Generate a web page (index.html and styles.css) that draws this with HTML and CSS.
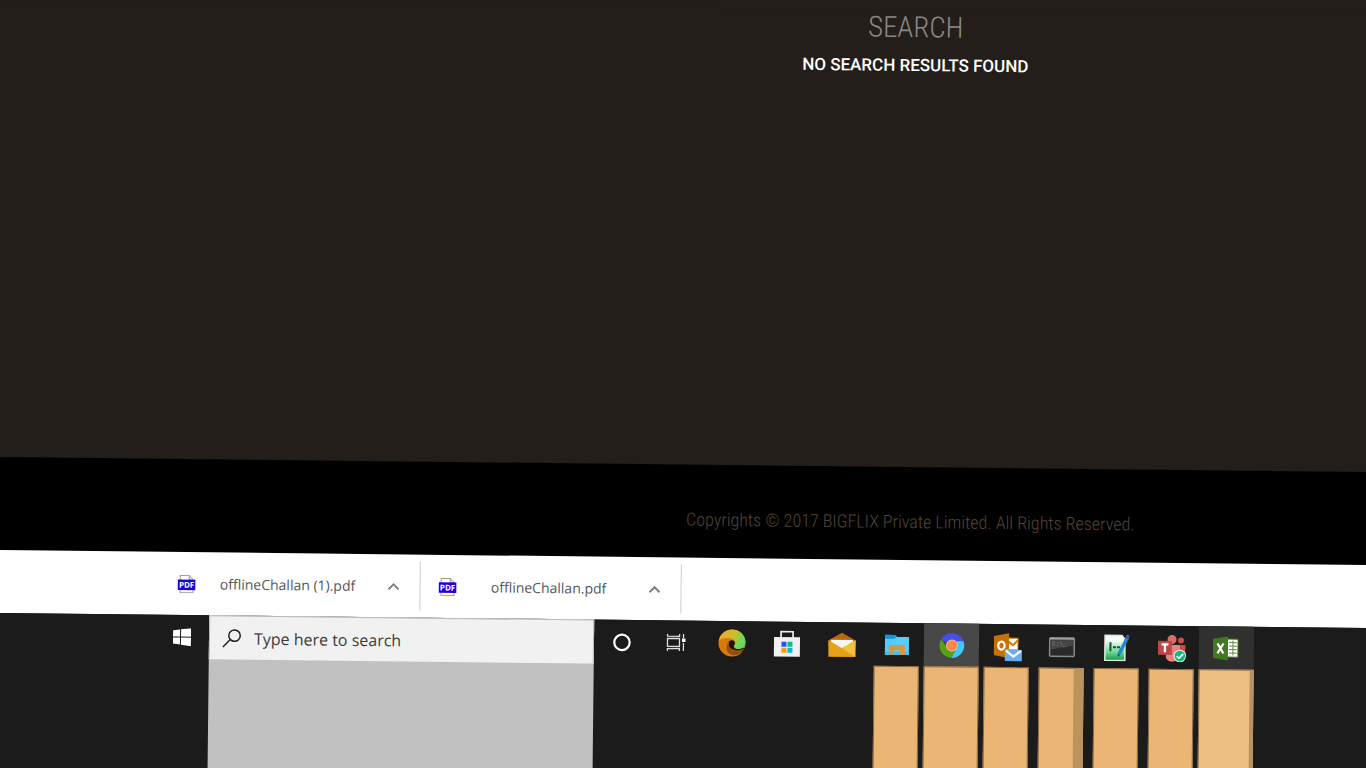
FILE: index.html
```html
<!DOCTYPE html>
<html lang="en">
<head>
<meta charset="utf-8">
<title>Search</title>
<link rel="stylesheet" href="styles.css">
</head>
<body>
<div class="scene">
  <main class="results">
    <h1 class="results-title">SEARCH</h1>
    <p class="results-message">NO SEARCH RESULTS FOUND</p>
  </main>
  <footer class="copyright">Copyrights © 2017 BIGFLIX Private Limited. All Rights Reserved.</footer>

  <section class="downloads" aria-label="Downloads">
    <div class="download">
      <svg class="pdf" viewBox="0 0 18 18" aria-hidden="true"><path d="M2.500 .5h9l4 4v13h-13z" fill="#fff" stroke="#999"/><path d="M11.500 .5v4h4" fill="#ddd" stroke="#999"/><rect y="4.500" width="18" height="10.500" fill="#1d00dc"/><text class="pdf-text" x="9" y="12.700">PDF</text></svg>
      <span class="download-name">offlineChallan (1).pdf</span>
      <button class="chevron" aria-label="Options for offlineChallan (1).pdf"><svg viewBox="0 0 12 8"><path d="M1 7l5-5 5 5" fill="none" stroke="#808080" stroke-width="2"/></svg></button>
    </div>
    <div class="download">
      <svg class="pdf" viewBox="0 0 18 18" aria-hidden="true"><path d="M2.500 .5h9l4 4v13h-13z" fill="#fff" stroke="#999"/><path d="M11.500 .5v4h4" fill="#ddd" stroke="#999"/><rect y="4.500" width="18" height="10.500" fill="#1d00dc"/><text class="pdf-text" x="9" y="12.700">PDF</text></svg>
      <span class="download-name">offlineChallan.pdf</span>
      <button class="chevron" aria-label="Options for offlineChallan.pdf"><svg viewBox="0 0 12 8"><path d="M1 7l5-5 5 5" fill="none" stroke="#808080" stroke-width="2"/></svg></button>
    </div>
  </section>

  <nav class="taskbar" aria-label="Taskbar">
    <div class="start">
      <button class="task" aria-label="Start"><svg class="start-icon" viewBox="0 0 18 18" fill="#fff"><path d="M0 2.400L7 1.400V8.500H0zM8 1.200L18 0V8.500H8zM0 9.500H7V16.500L0 15.500zM8 9.500H18V18L8 16.700z"/></svg></button>
    </div>
    <div class="search">
      <label class="search-box">
        <svg class="search-icon" viewBox="0 0 20 20" fill="none" stroke="#222" stroke-width="1.500"><circle cx="12.500" cy="7" r="5.700"/><path d="M8.300 11L1 18.500"/></svg>
        <input class="search-input" type="text" placeholder="Type here to search" aria-label="Type here to search">
      </label>
    </div>
    <div class="apps">
      <div class="app"><button class="task" aria-label="Cortana"><svg class="icon" viewBox="0 0 28 28"><circle cx="14" cy="14.500" r="7.700" fill="none" stroke="#fff" stroke-width="2.200"/></svg></button></div>
      <div class="app"><button class="task" aria-label="Task view"><svg class="icon" viewBox="0 0 28 28" fill="none" stroke="#ddd" stroke-width="1.300"><path d="M4.500 5.500V7.800H16.500V5.500M4.500 22.500V20.200H16.500V22.500M4.500 10H16.500V18H4.500zM20.500 5.500V9.500M20.500 14.500V22.500"/><path d="M19 10h3.500v3.500H19z" fill="#fff" stroke="none"/></svg></button></div>
      <div class="app"><button class="task" aria-label="Microsoft Edge"><svg class="icon" viewBox="0 0 28 28">
        <defs><linearGradient id="edge-top" x1="0" y1=".3" x2="1" y2=".7"><stop offset="0" stop-color="#f0a82a"/><stop offset=".5" stop-color="#cbbd2c"/><stop offset="1" stop-color="#42e56a"/></linearGradient></defs>
        <circle cx="14" cy="14" r="13.500" fill="#d97909"/><path d="M.7 12C2 4.500 8 .5 14 .5c8 0 13.500 6 13.500 12 0 5-3.500 7.500-7.500 7.500-3 0-4.500-1.500-3.500-3.200 2-3.300 0-6.300-3.500-7.300C8.500 8.300 3 9 .7 12z" fill="url(#edge-top)"/><path d="M11 12.500c2-2.500 6-1.500 6 1.500 0 2-2 2.300-.8 4.300 1.400 2 5.800 2.200 9.200.2l2 .5-1.500 3c-4 2-8 3-11.500 0-3-2.300-4.500-5.500-3.400-9.500z" fill="#1d1712"/><path d="M11 12.500c-1 5 2 7.500 6 8.500 3.500.7 7-.5 9.500-2-2 4.500-7 8-12 7C8 25 7 16 11 12.500z" fill="#984e0b"/></svg></button></div>
      <div class="app"><button class="task" aria-label="Microsoft Store"><svg class="icon" viewBox="0 0 28 28"><path d="M8 8V2h12v6" fill="none" stroke="#eee" stroke-width="1.700"/><path d="M1 7.500h26V27H1z" fill="#f1f1f3"/><path d="M8.500 12h5v5h-5z" fill="#2853f1"/><path d="M14.500 12h5v5h-5z" fill="#0bc27b"/><path d="M8.500 18h5v5h-5z" fill="#f2a300"/><path d="M14.500 18h5v5h-5z" fill="#00b6f5"/></svg></button></div>
      <div class="app"><button class="task" aria-label="Mail"><svg class="icon" viewBox="0 0 28 28"><path d="M.5 10L14 2.500 27.500 10v6H.5z" fill="#bd690a"/><path d="M3 9.500h22V18H3z" fill="#f5f5f5"/><path d="M.5 9.800L14 18l13.500-8.200V26.500H.5z" fill="#e6a01b"/><path d="M27.500 9.800V26.500L14 17.700z" fill="#f4c238"/></svg></button></div>
      <div class="app"><button class="task" aria-label="File Explorer"><svg class="icon" viewBox="0 0 28 28"><path d="M2 4h10l2 2h12v18H2z" fill="#55cdfb"/><path d="M2 4h10l1 3-3 1H2z" fill="#0798d7"/><path d="M2 21h24v3H2z" fill="#43bff3"/><path d="M6 24v-9l2-1h12l2 1v9h-5v-4.500h-6V24z" fill="#d49746"/></svg></button><div class="preview"></div></div>
      <div class="app app-active"><button class="task" aria-label="Google Chrome"><svg class="icon" viewBox="0 0 28 28"><path d="M14 14L3.200 7.800A12.500 12.500 0 0 1 25.500 9.500H14z" fill="#4450e3"/><path d="M25.500 9.500A12.500 12.500 0 0 1 13.500 26.500L19 15V9.500z" fill="#3fc9fb"/><path d="M3.200 7.800A12.500 12.500 0 0 0 13.500 26.500L19 16 9 16z" fill="#58a017"/><circle cx="14" cy="14" r="6" fill="#e6b7a6"/><circle cx="14" cy="14" r="5" fill="#fc8746"/></svg></button><div class="preview preview-wide"></div></div>
      <div class="app"><button class="task" aria-label="Outlook"><svg class="icon icon-large" viewBox="0 0 32 32"><path d="M17 8h10v13H17z" fill="#fff" stroke="#d07a0a"/><path d="M17 11l5 4 5-5" fill="none" stroke="#d07a0a" stroke-width="2"/><path d="M3 6l15-3v25L3 25z" fill="#c77105"/><ellipse cx="10.500" cy="15.500" rx="3.200" ry="4" fill="none" stroke="#fff" stroke-width="2.200"/><path d="M14 19h17v12H14z" fill="#69aeea"/><path d="M15 20.500l7.500 6 7.500-6" fill="none" stroke="#fff" stroke-width="2.200"/></svg></button><div class="preview"></div></div>
      <div class="app"><button class="task" aria-label="Command Prompt"><svg class="icon" viewBox="0 0 28 28"><rect x="1.700" y="5.200" width="24.600" height="18.500" rx="1" fill="#2b2a2a" stroke="#888" stroke-width="1.500"/><path d="M3 7h22v6L3 17z" fill="#454343"/><path d="M2 6.200h24" stroke="#aaa" stroke-width="1.600"/><text class="cmd-text" x="4" y="13">C:\_</text></svg></button><div class="preview preview-stacked"></div></div>
      <div class="app"><button class="task" aria-label="Editor"><svg class="icon" viewBox="0 0 28 28"><defs><linearGradient id="note-fill" x2="0" y2="1"><stop offset=".2" stop-color="#f5fff8"/><stop offset=".65" stop-color="#6ee099"/><stop offset="1" stop-color="#179a43"/></linearGradient></defs><path d="M2 2h17l3 4v21H2z" fill="url(#note-fill)" stroke="#e2eae4" stroke-width="1.500"/><path d="M7.500 9v9M10 14h3M14 14h3" stroke="#34423a" stroke-width="2"/><path d="M24.500 4L16 21" stroke="#238ac7" stroke-width="3.500"/><path d="M23 3l3 1" stroke="#4958a9" stroke-width="4"/><path d="M16 21l-.5 2" stroke="#23445d" stroke-width="2"/></svg></button><div class="preview"></div></div>
      <div class="app"><button class="task" aria-label="Microsoft Teams"><svg class="icon" viewBox="0 0 28 28"><circle cx="14" cy="5.500" r="4.500" fill="#dc6e69"/><circle cx="23" cy="6.500" r="3" fill="#cf4d49"/><path d="M20 11h7.500v9a5 5 0 0 1-7.500 4z" fill="#c74d49"/><path d="M8 11h14v10a7.500 7.500 0 0 1-14 3z" fill="#ea817c"/><path d="M0 7h14v14H0z" fill="#bc4648"/><path d="M3.500 10.500h7M7 10.500v8" stroke="#fff" stroke-width="2.300"/><circle cx="22" cy="22" r="5.800" fill="#10b77c" stroke="#dff7ed" stroke-width="1"/><path d="M18.800 22l2.300 2.300 4.200-4.500" fill="none" stroke="#fff" stroke-width="1.700"/></svg></button><div class="preview"></div></div>
      <div class="app app-hover"><button class="task" aria-label="Excel"><svg class="icon" viewBox="0 0 28 28"><path d="M14 4.500h11v18H14z" fill="#fff" stroke="#47751f"/><path d="M16 8h8M16 11.500h8M16 15h8M16 18.500h8M20 6v15" stroke="#64893f" stroke-width="1"/><path d="M0 4.300L15 2v24L0 23.500z" fill="#427820"/><path d="M4.500 9l6 10M10.500 9l-6 10" stroke="#fff" stroke-width="2.200"/></svg></button><div class="preview preview-wide preview-light"></div></div>
    </div>
  </nav>
</div>
</body>
</html>
```
FILE: styles.css
```css
* { box-sizing: border-box; }

body {
  margin: 0;
  overflow: hidden;
  background: #231e1a;
}

button {
  padding: 0;
  border: 0;
  background: none;
}

svg { display: block; }

/* The whole desktop leans slightly; the extra size keeps its edges out of view. */
.scene {
  display: flex;
  flex-direction: column;
  width: calc(100% + 32px);
  min-height: calc(100vh + 16px);
  transform: rotate(0.63deg);
  transform-origin: 0 0;
  font-family: Roboto, sans-serif;
}

.results {
  min-height: 457px;
  padding-left: 434px;
  background: #231e1a;
  text-align: center;
}

.results-title {
  margin: 0;
  color: #8b8785;
  font-family: "Roboto Condensed", Roboto, sans-serif;
  font-size: 29px;
  font-weight: 300;
  line-height: 34px;
}

.results-message {
  margin: 9px 0 0;
  color: #fff;
  font-size: 17px;
  font-weight: 500;
  line-height: 24px;
}

.copyright {
  padding: 43px 0 26px 434px;
  background: #000;
  color: #54433a;
  font-family: "Roboto Condensed", Roboto, sans-serif;
  font-size: 18px;
  font-weight: 300;
  line-height: 24px;
  text-align: center;
}

.downloads {
  display: flex;
  padding: 7px 0 7px 166px;
  background: #fff;
}

.download {
  display: flex;
  align-items: center;
  width: 261px;
  height: 49px;
  padding: 0 20px 0 18px;
  border-right: 1px solid #ccc;
}

.pdf {
  width: 18px;
  height: 18px;
}

.pdf-text {
  fill: #fff;
  font: bold 8px "Open Sans", sans-serif;
  text-anchor: middle;
}

.download-name {
  flex: 1;
  margin-right: 8px;
  color: #55565c;
  font: 14px/20px "Open Sans", sans-serif;
  text-align: center;
}

.chevron { width: 12px; }

.taskbar {
  display: flex;
  flex: 1;
  background: #1b1b1b;
}

.task {
  display: flex;
  align-items: center;
  justify-content: center;
  width: 55px;
  height: 43px;
}

.start {
  display: flex;
  justify-content: flex-end;
  width: 216px;
}

.start-icon {
  width: 18px;
  height: 18px;
}

.search {
  width: 385px;
  background: #c1c1c1;
}

.search-box {
  display: flex;
  align-items: center;
  gap: 12px;
  height: 44px;
  padding: 0 12px;
  border: 1px solid #b8b8b8;
  border-bottom: 0;
  background: #f1f1f1;
}

.search-icon {
  width: 20px;
  height: 20px;
}

.search-input {
  flex: 1;
  min-width: 0;
  padding: 0;
  border: 0;
  background: none;
  font: 16px/24px "Open Sans", sans-serif;
}

.search-input::placeholder {
  color: #3a3a3a;
  opacity: 1;
}

.apps { display: flex; }

.app {
  display: flex;
  flex-direction: column;
  width: 55px;
}

.app-active { background: #484848; }
.app-hover { background: #303030; }

.icon {
  width: 28px;
  height: 28px;
}

.icon-large {
  width: 32px;
  height: 32px;
}

.preview {
  flex: 1;
  margin: 0 5px;
  border: 1px solid #8a6b46;
  border-bottom: 0;
  background: #ebb675;
}

.preview-wide { margin: 0; }
.preview-stacked { border-right: 10px solid #ba935f; }

.preview-light {
  border-right: 4px solid #b59464;
  background: #edbf83;
}

.cmd-text {
  fill: #999;
  font: 6px "Liberation Mono", monospace;
}
```
